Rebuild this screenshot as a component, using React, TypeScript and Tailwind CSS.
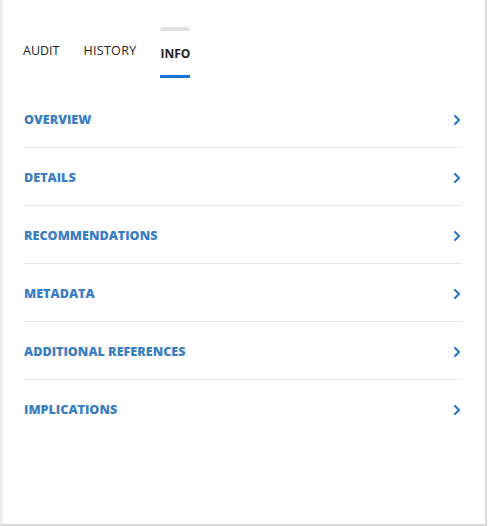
import { ChevronRight } from "lucide-react";

const sections = [
  "OVERVIEW",
  "DETAILS",
  "RECOMMENDATIONS",
  "METADATA",
  "ADDITIONAL REFERENCES",
  "IMPLICATIONS",
];

export default function App() {
  return (
    <div
      className="w-[487px] h-[526px] bg-white border-l-[3px] border-l-[#ededed] border-r-2 border-r-[#d9d9d9] border-b-2 border-b-[#d9d9d9] flex flex-col"
      style={{ fontFamily: '"Open Sans", "Liberation Sans", sans-serif' }}
    >
      <div className="flex items-start pl-5 pt-[27px]">
        <button className="mt-[16px] text-[12.5px] leading-[16px] text-[#222]">AUDIT</button>
        <button className="ml-[24px] mt-[16px] text-[12.5px] tracking-[0.3px] leading-[16px] text-[#222]">HISTORY</button>
        <button className="ml-[24px] flex flex-col">
          <span className="h-[4px] w-full rounded-t-md bg-[#e2e2e2]" />
          <span className="pt-[15px] pb-[13px] text-[12px] leading-[16px] font-bold text-[#222]">INFO</span>
          <span className="h-[3px] w-full bg-[#1a73d9]" />
        </button>
      </div>

      <div className="mt-[12px] ml-[21px] mr-[23px] flex flex-col">
        {sections.map((s, i) => (
          <div
            key={s}
            className={`h-[58px] flex items-center justify-between ${
              i < sections.length - 1 ? "border-b border-[#e6e6e6]" : ""
            }`}
          >
            <span className="pt-[3px] text-[12.6px] font-extrabold text-[#3b7ec3]">{s}</span>
            <ChevronRight className="mt-[2px] w-[16px] h-[16px] text-[#2c78c8] -mr-[3px]" strokeWidth={3.2} />
          </div>
        ))}
      </div>
    </div>
  );
}
